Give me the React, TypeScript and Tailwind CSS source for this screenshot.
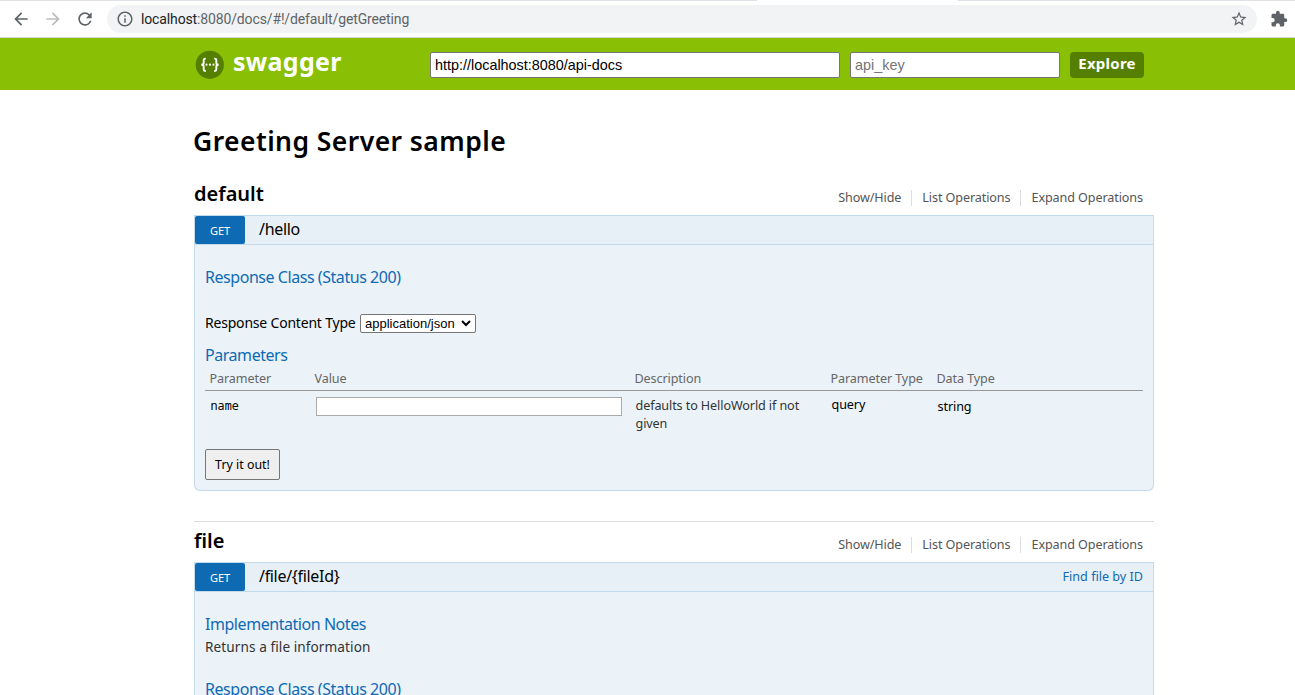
import type { ReactNode } from "react";
import { MdArrowBack, MdArrowForward, MdExtension, MdInfoOutline, MdRefresh, MdStarBorder } from "react-icons/md";

function BrowserBar() {
  return (
    <div className="flex h-[38px] flex-col border-b border-[#d5d7db] bg-white">
      <div className="flex h-px justify-between">
        <div className="w-[757px] bg-[#dee1e6]" />
        <div className="w-[337px] bg-[#dee1e6]" />
      </div>
      <div className="flex h-9 items-center font-['Roboto',sans-serif] text-[#5f6368]">
        <MdArrowBack className="ml-[11px] size-5" />
        <MdArrowForward className="ml-3 size-5 text-[#babcbe]" />
        <MdRefresh className="ml-3 size-5" />
        <div className="ml-3 flex h-7 w-[1150px] items-center rounded-full bg-[#f1f3f4] pr-[9px] pl-[9px]">
          <MdInfoOutline className="size-[18px]" />
          <span className="ml-[7px] text-[14px] leading-5 tracking-[-0.135px] whitespace-nowrap">
            <span className="text-[#202124]">localhost</span>:8080/docs/#!/default/getGreeting
          </span>
          <MdStarBorder className="ml-auto size-[18px]" />
        </div>
        <MdExtension className="ml-[13px] size-[18px] shrink-0" />
      </div>
    </div>
  );
}

function SwaggerLogo() {
  return (
    <svg className="mt-[12px] ml-[1px] size-[29px] shrink-0" viewBox="0 0 29 29" fill="none">
      <circle cx="14.8" cy="14.8" r="14.1" fill="#547f00" />
      <path
        d="M10.8 8.6H10.2C9.1 8.6 8.7 9.1 8.7 10.1V12.7C8.7 14 8.2 14.7 6.4 14.8C8.2 14.9 8.7 15.6 8.7 16.9V19.5C8.7 20.5 9.1 21 10.2 21H10.8M19.2 8.6H19.8C20.9 8.6 21.3 9.1 21.3 10.1V12.7C21.3 14 21.8 14.7 23.6 14.8C21.8 14.9 21.3 15.6 21.3 16.9V19.5C21.3 20.5 20.9 21 19.8 21H19.2"
        stroke="white"
        strokeWidth="1.9"
      />
      <circle cx="11.5" cy="14.7" r="1.1" fill="white" />
      <circle cx="15" cy="14.7" r="1.1" fill="white" />
      <circle cx="18.5" cy="14.7" r="1.1" fill="white" />
    </svg>
  );
}

function Header() {
  return (
    <header className="flex h-[52px] items-start bg-[#89bf04] pl-[194px]">
      <SwaggerLogo />
      <span className="mt-[7px] ml-[9px] w-[197px] text-[25px] leading-8 font-bold tracking-[0.3px] text-white">swagger</span>
      <input
        className="mt-[14px] h-[26px] w-[410px] rounded-[2px] border border-[#767676] bg-white px-1 font-['Liberation_Sans',sans-serif] text-[14.4px] text-black"
        defaultValue="http://localhost:8080/api-docs"
      />
      <input
        className="mt-[14px] ml-[10px] h-[26px] w-[210px] rounded-[2px] border border-[#767676] bg-white px-1 font-['Liberation_Sans',sans-serif] text-[14.4px] placeholder:text-[#757575]"
        placeholder="api_key"
      />
      <button className="mt-[14px] ml-[10px] h-[26px] w-[74px] rounded-[4px] bg-[#547f00] pb-[3px] text-[15px] leading-[23px] font-bold tracking-[0.25px] text-white">
        Explore
      </button>
    </header>
  );
}

function ResourceHeading({ name }: { name: string }) {
  return (
    <div className="flex h-[37px] items-start justify-between">
      <h2 className="mt-[2px] text-[20px] leading-7 font-semibold text-black">{name}</h2>
      <ul className="mt-[12px] mr-[11px] flex text-[12.6px] leading-4 tracking-[-0.1px] text-[#555]">
        <li className="pr-[10px]">Show/Hide</li>
        <li className="border-l border-[#ddd] px-[10px]">List Operations</li>
        <li className="border-l border-[#ddd] pl-[10px]">Expand Operations</li>
      </ul>
    </div>
  );
}

function Operation({ path, summary, children }: { path: string; summary?: string; children: ReactNode }) {
  return (
    <>
      <div className="flex h-[30px] items-start border border-[#c3d9ec] bg-[#e7f0f7] leading-7">
        <span className="flex h-7 w-[50px] items-center justify-center rounded-[2px] bg-[#0f6ab4] pt-[2px] text-[11px] text-white">
          GET
        </span>
        <span className="ml-[14px] text-[16px] leading-[26px] tracking-[-0.32px] text-black">{path}</span>
        <span className="mr-[10px] ml-auto text-[12.6px] text-[#0f6ab4]">{summary}</span>
      </div>
      {children}
    </>
  );
}

function SectionTitle({ children }: { children: ReactNode }) {
  return <h4 className="text-[16px] leading-5 tracking-[-0.45px] text-[#0f6ab4]">{children}</h4>;
}

const columns = "grid grid-cols-[105px_320px_196px_106px_1fr] tracking-[-0.1px]";

function ParameterTable() {
  return (
    <div className="w-[938px]">
      <div className={columns + " h-[26px] border-b border-[#999] pl-[4.5px] text-[12.6px] leading-[27px] text-[#666]"}>
        <span>Parameter</span>
        <span>Value</span>
        <span>Description</span>
        <span>Parameter Type</span>
        <span>Data Type</span>
      </div>
      <div className={columns + " h-[58px] items-start pt-[6px] pl-[5.5px] text-[12.6px] leading-[18px] text-black"}>
        <span className="-mt-px font-['Noto_Sans_Mono','DejaVu_Sans_Mono',monospace] text-[11.8px] tracking-normal">name</span>
        <input className="ml-[0.5px] h-[19px] w-[306px] border border-[#aaa] bg-white" />
        <span className="text-[#333]">
          defaults to HelloWorld if not
          <br />
          given
        </span>
        <span className="-mt-px">query</span>
        <span className="pt-px">string</span>
      </div>
    </div>
  );
}

export default function App() {
  return (
    <div className="h-[695px] w-[1295px] overflow-hidden bg-white font-['Noto_Sans','Open_Sans',sans-serif]">
      <BrowserBar />
      <Header />
      <main className="ml-[194px] w-[960px]">
        <h1 className="-ml-px pt-[33px] text-[26.5px] leading-[36px] font-semibold tracking-[0.44px] text-black">
          Greeting Server sample
        </h1>
        <section className="pt-[19px]">
          <ResourceHeading name="default" />
          <Operation path="/hello">
            <div className="h-[246px] rounded-b-[6px] border border-t-0 border-[#c3d9ec] bg-[#ebf3f9] px-[10px] pt-[22px]">
              <SectionTitle>Response Class (Status 200)</SectionTitle>
              <div className="mt-[26px] flex h-5 items-center text-[14px] text-black">
                <span className="w-[155px] pb-[2px] tracking-[-0.2px] whitespace-nowrap">Response Content Type</span>
                <div className="flex h-[19px] w-[116px] items-center justify-between rounded-[2px] border border-[#767676] bg-white px-1 font-['Liberation_Sans',sans-serif] text-[13px]">
                  <span className="pt-px">application/json</span>
                  <svg className="size-[10px]" viewBox="0 0 10 10" fill="none">
                    <path d="M1 3L5 7L9 3" stroke="black" strokeWidth="2" />
                  </svg>
                </div>
              </div>
              <div className="mt-[12px]">
                <SectionTitle>Parameters</SectionTitle>
              </div>
              <ParameterTable />
              <button className="h-[31px] w-[75px] rounded-[2px] border border-[#767676] bg-[#efefef] pt-px text-[12.4px] text-black">
                Try it out!
              </button>
            </div>
          </Operation>
        </section>
        <section className="mt-[30px] border-t border-[#ddd] pt-[3px]">
          <ResourceHeading name="file" />
          <Operation path="/file/{fileId}" summary="Find file by ID">
            <div className="border-x border-[#c3d9ec] bg-[#ebf3f9] px-[10px] pt-[22px] pb-10">
              <SectionTitle>Implementation Notes</SectionTitle>
              <p className="mt-[3px] mb-[22px] text-[13.6px] leading-5 tracking-[0.08px] text-[#333]">Returns a file information</p>
              <SectionTitle>Response Class (Status 200)</SectionTitle>
            </div>
          </Operation>
        </section>
      </main>
    </div>
  );
}
